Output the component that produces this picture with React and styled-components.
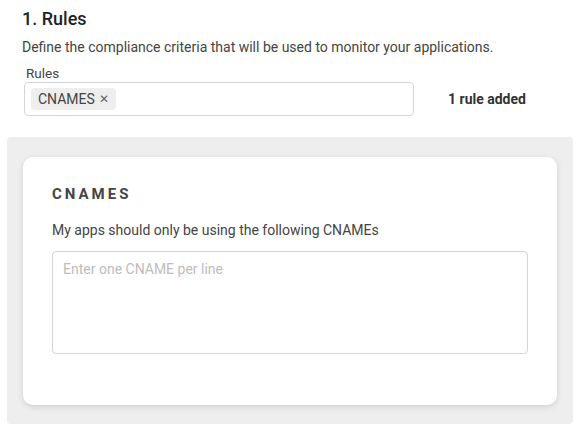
import React from "react";
import styled, { createGlobalStyle } from "styled-components";

const Global = createGlobalStyle`
  html, body { margin: 0; padding: 0; background: #fff; }
  body { font-family: Roboto, "Liberation Sans", Arial, sans-serif; color: #333; }
  * { box-sizing: border-box; }
`;

const Page = styled.div`
  width: 580px;
  padding: 8px 7px 0;
`;

const Header = styled.div`
  padding-left: 15px;
`;

const Title = styled.h2`
  margin: 0;
  font-size: 18px;
  line-height: 22px;
  font-weight: 500;
  color: #222;
`;

const Desc = styled.p`
  margin: 8px 0 0;
  font-size: 14px;
  line-height: 18px;
  color: #444;
`;

const Field = styled.div`
  margin-left: 2px;
  margin-top: 8px;
`;

const Label = styled.div`
  font-size: 13.5px;
  line-height: 18px;
  color: #444;
  padding-left: 2px;
`;

const Row = styled.div`
  display: flex;
  align-items: center;
  gap: 34px;
`;

const TagBox = styled.div`
  width: 390px;
  height: 34px;
  border: 1px solid #d6d6d6;
  border-radius: 4px;
  padding: 5px 6px;
  display: flex;
  align-items: center;
`;

const Chip = styled.span`
  display: inline-flex;
  align-items: center;
  gap: 4px;
  height: 22px;
  padding: 0 7px;
  background: #eeeeee;
  border-radius: 4px;
  font-size: 14px;
  color: #444;
`;

const Close = styled.span`
  font-size: 12px;
  color: #666;
`;

const Count = styled.span`
  font-size: 14px;
  font-weight: 700;
  color: #333;
`;

const Panel = styled.div`
  margin-top: 21px;
  background: #eeeeee;
  border-radius: 4px;
  padding: 20px 16px 19px;
`;

const Card = styled.div`
  background: #fff;
  border-radius: 10px;
  box-shadow: 0 2px 6px rgba(0, 0, 0, 0.12);
  padding: 27px 29px 51px;
`;

const CardTitle = styled.h3`
  margin: 0;
  font-size: 15px;
  line-height: 20px;
  font-weight: 700;
  letter-spacing: 3px;
  color: #444;
`;

const CardText = styled.p`
  margin: 16px 0 0;
  font-size: 14px;
  line-height: 20px;
  color: #444;
`;

const Area = styled.textarea`
  display: block;
  margin-top: 11px;
  width: 100%;
  height: 103px;
  border: 1px solid #d4d4d4;
  border-radius: 4px;
  padding: 8px 10px;
  resize: none;
  font-family: Roboto, "Liberation Sans", Arial, sans-serif;
  font-size: 14px;
  line-height: 18px;
  color: #333;
  outline: none;
  &::placeholder { color: #bdbdbd; }
`;

export default function App() {
  return (
    <Page>
      <Global />
      <Header>
        <Title>1. Rules</Title>
        <Desc>Define the compliance criteria that will be used to monitor your applications.</Desc>
        <Field>
          <Label>Rules</Label>
          <Row>
            <TagBox>
              <Chip>
                CNAMES<Close>✕</Close>
              </Chip>
            </TagBox>
            <Count>1 rule added</Count>
          </Row>
        </Field>
      </Header>
      <Panel>
        <Card>
          <CardTitle>CNAMES</CardTitle>
          <CardText>My apps should only be using the following CNAMEs</CardText>
          <Area placeholder="Enter one CNAME per line" />
        </Card>
      </Panel>
    </Page>
  );
}
